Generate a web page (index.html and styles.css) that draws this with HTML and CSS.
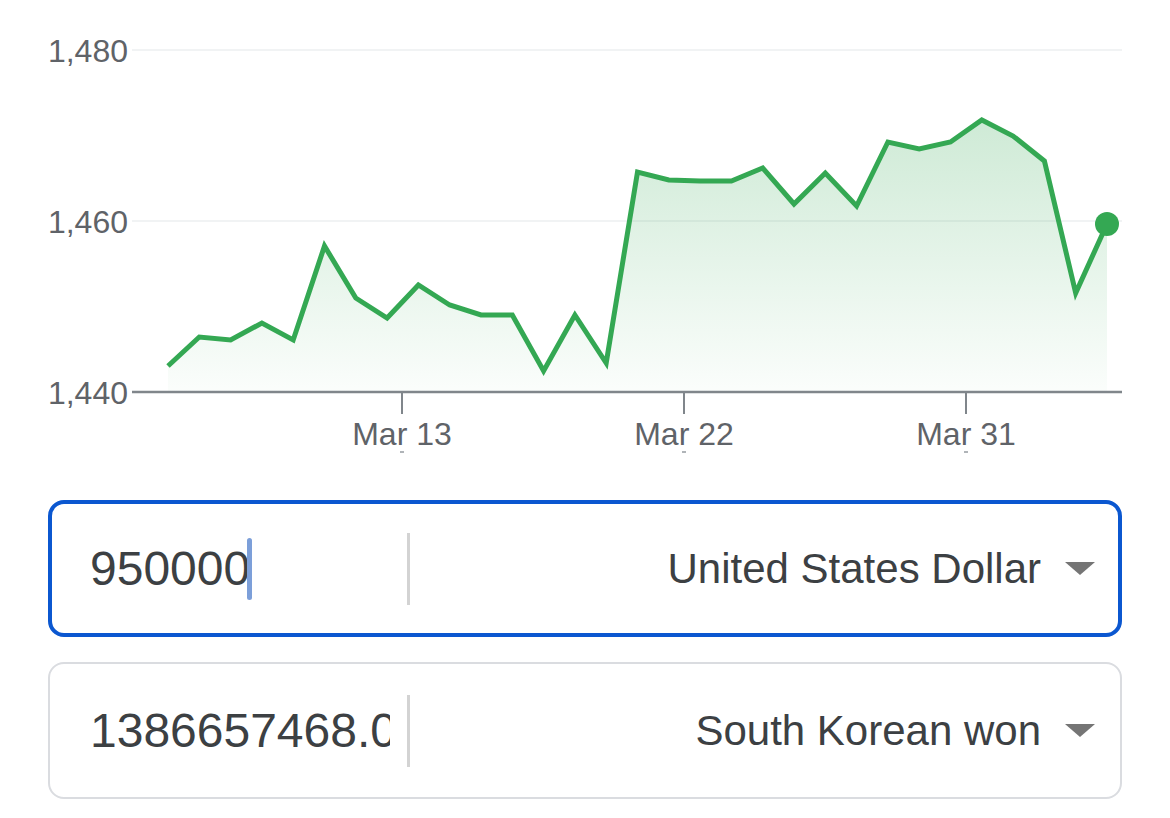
FILE: index.html
```html
<!DOCTYPE html>
<html lang="en">
<head>
<meta charset="utf-8">
<title>Currency converter</title>
<link rel="stylesheet" href="styles.css">
</head>
<body>
<div class="page">
  <svg class="chart" width="1170" height="470" viewBox="0 0 1170 470" xmlns="http://www.w3.org/2000/svg">
    <defs>
      <linearGradient id="area" x1="0" y1="120" x2="0" y2="392" gradientUnits="userSpaceOnUse">
        <stop offset="0" stop-color="#34a853" stop-opacity="0.24"/>
        <stop offset="1" stop-color="#34a853" stop-opacity="0.02"/>
      </linearGradient>
    </defs>
    <line class="grid" x1="132" y1="50" x2="1122" y2="50"/>
    <line class="grid" x1="132" y1="221" x2="1122" y2="221"/>
    <text class="ylabel" x="128" y="62">1,480</text>
    <text class="ylabel" x="128" y="233">1,460</text>
    <text class="ylabel" x="128" y="404">1,440</text>
    <polygon class="area" points="168,366 199.3,337 230.6,340 261.9,323 293.2,340 324.5,246 355.8,298 387.1,318 418.4,285 449.7,305 481,315 512.3,315 543.6,371 574.9,315 606.2,363 637.5,172 668.8,180 700.1,181 731.4,181 762.7,168 794,204 825.3,173 856.6,206 887.9,142 919.2,149 950.5,142 981.8,120 1013.1,136 1044.4,161 1075.7,293 1107,224 1107,392 168,392"/>
    <polyline class="line" points="168,366 199.3,337 230.6,340 261.9,323 293.2,340 324.5,246 355.8,298 387.1,318 418.4,285 449.7,305 481,315 512.3,315 543.6,371 574.9,315 606.2,363 637.5,172 668.8,180 700.1,181 731.4,181 762.7,168 794,204 825.3,173 856.6,206 887.9,142 919.2,149 950.5,142 981.8,120 1013.1,136 1044.4,161 1075.7,293 1107,224"/>
    <circle class="dot" cx="1107" cy="224" r="12"/>
    <line class="axis" x1="132" y1="392" x2="1122" y2="392"/>
    <line class="tick" x1="402" y1="392" x2="402" y2="414"/>
    <line class="tick" x1="684" y1="392" x2="684" y2="414"/>
    <line class="tick" x1="966" y1="392" x2="966" y2="414"/>
    <text class="xlabel" x="402" y="445">Mar 13</text>
    <text class="xlabel" x="684" y="445">Mar 22</text>
    <text class="xlabel" x="966" y="445">Mar 31</text>
    <rect class="mark" x="400" y="451" width="4" height="2"/>
    <rect class="mark" x="682" y="451" width="4" height="2"/>
    <rect class="mark" x="964" y="451" width="4" height="2"/>
  </svg>

  <div class="converter">
    <div class="field field-focused">
      <div class="amount"><span class="value">950000</span><span class="caret"></span></div>
      <div class="divider"></div>
      <div class="currency"><span class="name">United States Dollar</span><span class="arrow"></span></div>
    </div>
    <div class="field">
      <div class="amount"><span class="value">1386657468.0</span></div>
      <div class="divider"></div>
      <div class="currency"><span class="name">South Korean won</span><span class="arrow"></span></div>
    </div>
  </div>
</div>
</body>
</html>
```

FILE: styles.css
```css
html, body {
  margin: 0;
  padding: 0;
  background: #ffffff;
}

body {
  font-family: "Liberation Sans", Arial, sans-serif;
  color: #3c4043;
}

.page {
  width: 1170px;
  height: 818px;
  overflow: hidden;
}

.chart {
  display: block;
}

.chart .grid {
  stroke: #f1f3f4;
  stroke-width: 2;
}

.chart .axis {
  stroke: #80868b;
  stroke-width: 2.5;
}

.chart .tick {
  stroke: #80868b;
  stroke-width: 2;
}

.chart .mark {
  fill: #b0b4b8;
}

.chart .ylabel {
  font-family: "Liberation Sans", Arial, sans-serif;
  font-size: 32px;
  fill: #5f6368;
  text-anchor: end;
}

.chart .xlabel {
  font-family: "Liberation Sans", Arial, sans-serif;
  font-size: 32px;
  fill: #5f6368;
  text-anchor: middle;
}

.chart .area {
  fill: url(#area);
}

.chart .line {
  fill: none;
  stroke: #34a853;
  stroke-width: 5;
  stroke-linejoin: miter;
  stroke-miterlimit: 4;
}

.chart .dot {
  fill: #34a853;
}

.converter {
  margin-top: 30px;
  padding: 0 48px;
  display: flex;
  flex-direction: column;
  gap: 25px;
}

.field {
  box-sizing: border-box;
  height: 137px;
  border: 2px solid #dadce0;
  padding: 2px;
  border-radius: 16px;
  display: flex;
  align-items: center;
}

.field-focused {
  border: 4px solid #0b57d0;
  padding: 0;
}

.amount {
  box-sizing: border-box;
  width: 338px;
  padding-left: 38px;
  overflow: hidden;
  white-space: nowrap;
  display: flex;
  align-items: center;
  font-size: 48px;
  line-height: 1;
  color: #3c4043;
}

.caret {
  display: inline-block;
  width: 5px;
  height: 62px;
  margin-left: -3px;
  border-radius: 3px;
  background: #7c9fd9;
}

.divider {
  width: 3px;
  height: 72px;
  margin-left: 17px;
  background: #d3d3d3;
}

.currency {
  flex: 1;
  display: flex;
  align-items: center;
  justify-content: flex-end;
  padding-right: 23px;
}

.name {
  font-size: 42px;
  line-height: 1;
  color: #3c4043;
}

.arrow {
  width: 0;
  height: 0;
  margin-left: 24px;
  border-left: 15px solid transparent;
  border-right: 15px solid transparent;
  border-top: 13px solid #757575;
}
```
